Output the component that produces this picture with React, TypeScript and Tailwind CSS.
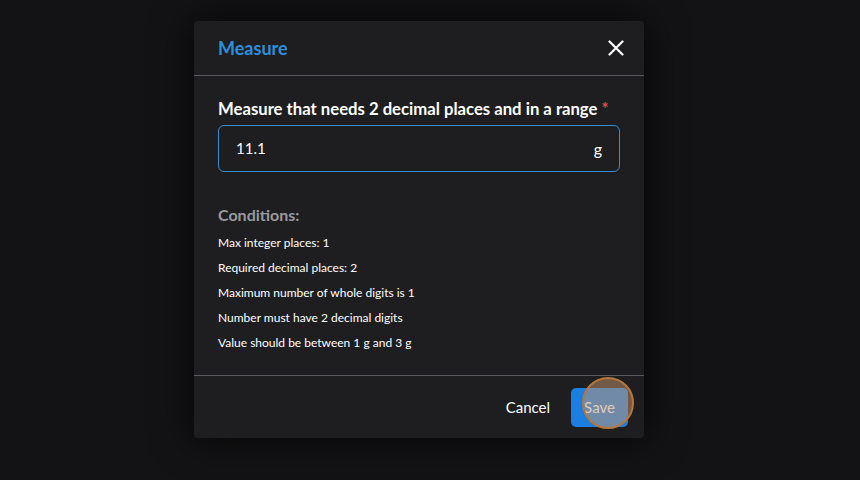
const CONDITIONS = [
  "Max integer places: 1",
  "Required decimal places: 2",
  "Maximum number of whole digits is 1",
  "Number must have 2 decimal digits",
  "Value should be between 1 g and 3 g",
];

export default function App() {
  return (
    <div
      className="w-[860px] h-[480px] bg-[#131315] flex pl-[194px] pt-[21px] overflow-hidden"
      style={{ fontFamily: "Lato, 'Noto Sans', sans-serif" }}
    >
      <div className="w-[450px] h-[417px] bg-[#1e1e20] rounded-[4px] shadow-[0_0_40px_rgba(0,0,0,0.8)] flex flex-col">
        {/* Header */}
        <div className="h-[55px] pl-6 pr-5 flex items-center justify-between border-b border-[#5a5a5e]">
          <span className="text-[18px] font-bold text-[#2d8fdb]">Measure</span>
          <svg width="16" height="16" viewBox="0 0 16 16" className="text-white">
            <path d="M1.5 1.5L14.5 14.5M14.5 1.5L1.5 14.5" stroke="currentColor" strokeWidth="2.2" strokeLinecap="round" />
          </svg>
        </div>

        {/* Body */}
        <div className="flex-1 px-6 pt-[23px]">
          <div className="text-[16.7px] font-bold text-white leading-[20px]">
            Measure that needs 2 decimal places and in a range{" "}
            <span className="text-[#e5484d]">*</span>
          </div>
          <div className="mt-[6px] h-[47px] border border-[#3a8bd0] rounded-[6px] flex items-center justify-between px-[17px]">
            <span className="text-[15px] text-white">11.1</span>
            <span className="text-[16px] text-white">g</span>
          </div>

          <div className="mt-[31px] text-[16px] font-bold text-[#9a9a9e]">Conditions:</div>
          <div className="mt-[7px] flex flex-col gap-[8px]">
            {CONDITIONS.map((c) => (
              <div key={c} className="text-[12px] text-white leading-[17px]">
                {c}
              </div>
            ))}
          </div>
        </div>

        {/* Footer */}
        <div className="h-[63px] border-t border-[#5a5a5e] flex items-center justify-end pr-4 gap-[21px]">
          <span className="text-[15px] text-white">Cancel</span>
          <div className="relative">
            <button className="w-[57px] h-[39px] rounded-[5px] bg-[#1a7fe0] text-white text-[15px]">
              Save
            </button>
            <div className="absolute left-[11px] top-[-11px] w-[52px] h-[52px] rounded-full border-[2.5px] border-[#b8763a] bg-[rgba(200,150,110,0.5)]" />
          </div>
        </div>
      </div>
    </div>
  );
}
